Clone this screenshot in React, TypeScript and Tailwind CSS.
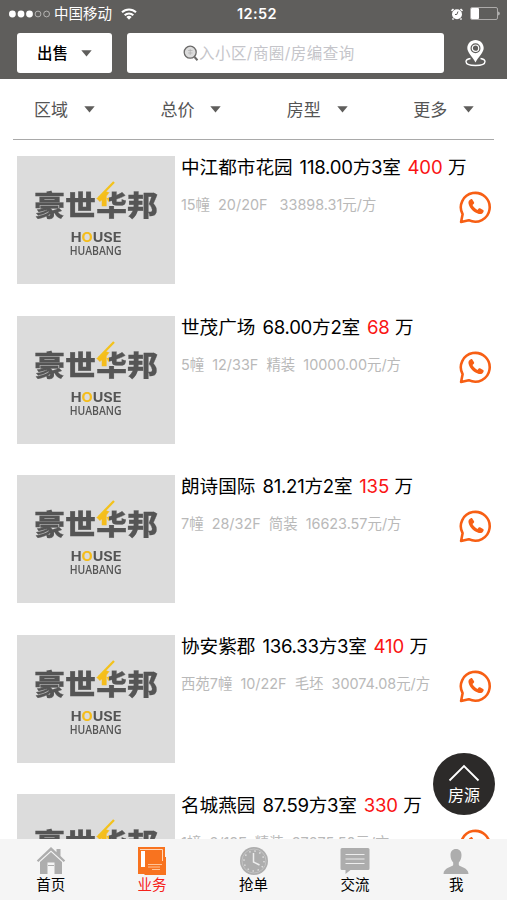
const FONT = "font-['Inter','Noto_Sans_CJK_SC',sans-serif]";

function Caret() {
  return (
    <svg width="11" height="7" viewBox="0 0 11 7" fill="#5f5e5c">
      <path d="M.3.3h10.4L5.5 6.5z" />
    </svg>
  );
}

function StatusBar() {
  return (
    <div className="flex h-[27px] items-center text-white">
      <div className="flex w-[169px] items-center pl-[9px]">
        <svg width="42" height="8" viewBox="0 0 42 8" fill="#fff">
          <circle cx="3.4" cy="4" r="3.4" />
          <circle cx="12" cy="4" r="3.4" />
          <circle cx="20.5" cy="4" r="3.4" />
          <g fill="none" stroke="#c9c8c7" strokeWidth=".8">
            <circle cx="29" cy="4" r="2.9" />
            <circle cx="37.6" cy="4" r="2.9" />
          </g>
        </svg>
        <span className="ml-[3px] pt-[2px] text-[14.5px] leading-none whitespace-nowrap">中国移动</span>
        <svg className="ml-[9px]" width="16" height="12" viewBox="0 0 16 12" fill="none" stroke="#fff" strokeWidth="2">
          <path d="M1 4.3a10 10 0 0 1 14 0M3.7 7.2a6 6 0 0 1 8.6 0" />
          <path d="M5.4 9a3.8 3.8 0 0 1 5.2 0L8 11.8z" fill="#fff" stroke="none" />
        </svg>
      </div>
      <div className="w-[176px] pt-px text-center text-[14.5px] leading-none font-semibold tracking-[0.4px]">12:52</div>
      <div className="flex flex-1 items-center justify-end gap-[7px] pr-[7px]">
        <svg width="12" height="12" viewBox="0 0 12 12">
          <circle cx="6" cy="6.3" r="5" fill="#fff" />
          <path d="M.5 2.800 2.500 1M11.500 2.800 9.500 1M2.500 10.500l-1 1M9.500 10.500l1 1" stroke="#fff" strokeWidth="1.6" />
          <path d="M7 3.500 5.800 6.500H4" fill="none" stroke="#5f5e5c" strokeWidth="1" />
        </svg>
        <svg width="30" height="13" viewBox="0 0 30 13">
          <rect x=".5" y=".5" width="27" height="12" rx="1.5" fill="none" stroke="#b5b4b3" strokeWidth=".9" />
          <rect x="1" y="1" width="8" height="11" rx="1" fill="#fff" />
          <path d="M28.500 4.500c1.300.5 1.300 3.500 0 4z" fill="#fff" />
        </svg>
      </div>
    </div>
  );
}

function Header() {
  return (
    <header className="h-[79px] bg-[#5f5e5c]">
      <StatusBar />
      <div className="flex pt-[6px] pl-[17px]">
        <button className="flex h-[40px] w-[95px] items-center rounded-[3px] bg-white pl-[20px] text-[15.5px] font-medium text-black">
          <span className="pt-px">出售</span>
          <span className="ml-[13px]"><Caret /></span>
        </button>
        <div className="ml-[15px] flex h-[40px] w-[317px] items-center rounded-[3px] bg-white pl-[56px]">
          <svg width="16" height="17" viewBox="0 0 16 17" fill="none" stroke="#6b6a69">
            <circle cx="7.200" cy="7.200" r="6" fill="#dcdcdc" strokeWidth="1.300" />
            <path d="M11.500 12l3 3.200" strokeWidth="2" />
            <path d="M5 5.500h4.500M5 8h4.500M7.200 4v6" stroke="#aaa" strokeWidth=".6" />
          </svg>
          <span className="pt-px text-[15.500px] tracking-[0.450px] whitespace-nowrap text-[#c5c5ca]">入小区/商圈/房编查询</span>
        </div>
        <svg className="mt-[7px] ml-[21px]" width="21" height="27" viewBox="0 0 21 27">
          <path d="M5.500 18.500C2.500 19 1 20 1 21.500 1 24 5 25.500 10.500 25.500S20 24 20 21.500c0-1.500-1.500-2.500-4.500-3" fill="none" stroke="#fff" strokeWidth="1.400" />
          <path fillRule="evenodd" fill="#fff" d="M10.500 0C6 0 2.300 3.600 2.300 8c0 4.500 5 8.500 8.200 14.500C13.700 16.500 18.700 12.500 18.700 8c0-4.400-3.700-8-8.200-8zm0 3.200a5 5 0 1 1 0 10 5 5 0 0 1 0-10z" />
          <circle cx="10.500" cy="8.200" r="3.200" fill="none" stroke="#fff" strokeWidth="1.200" />
        </svg>
      </div>
    </header>
  );
}

function Filters() {
  return (
    <nav className="mx-[13px] flex h-[61px] border-b border-[#a9a9a9] pl-[21px]">
      {["区域", "总价", "房型", "更多"].map((label) => (
        <div key={label} className="flex w-[126.4px] shrink-0 items-center text-[17px] text-[#555]">
          <span className="pt-[3px]">{label}</span>
          <span className="ml-[16px] pt-px"><Caret /></span>
        </div>
      ))}
    </nav>
  );
}

function Thumb() {
  return (
    <div className="flex h-[128px] w-[158px] shrink-0 flex-col items-center bg-[#dcdcdc] text-[#555]">
      <div className="relative mt-[33px] flex">
        <div className="flex scale-y-[0.92] text-[31px] leading-[34px] font-black [-webkit-text-stroke:0.3px_#555]">
          <span>豪</span>
          <span>世</span>
          <span className="bg-[#555] bg-[linear-gradient(#f5bd1c,#f5bd1c)] bg-[length:42%_54%] bg-clip-text bg-no-repeat text-transparent [-webkit-text-stroke:0.3px_transparent]">华</span>
          <span>邦</span>
        </div>
        <svg className="absolute -top-[9px] left-[63px]" width="20" height="20" viewBox="0 0 20 20" fill="none" stroke="#f3c21c" strokeWidth="2.300">
          <path d="M1.500 18 17 2" />
        </svg>
      </div>
      <div className="mt-[9px] h-[12px] scale-x-[1.150] text-[12.600px] leading-[12px] font-bold">
        H<span className="text-[#f5bd1c]">O</span>USE
      </div>
      <div className="h-[12px] scale-x-[0.820] font-['Open_Sans',sans-serif] text-[12.700px] leading-[12px] font-semibold">HUABANG</div>
    </div>
  );
}

function PhoneIcon() {
  return (
    <svg width="34" height="34" viewBox="0 0 33 33">
      <path d="M2 31 3.500 23.500A14 14 0 1 1 9.500 29.300z" fill="none" stroke="#f75f14" strokeWidth="2.500" strokeLinejoin="round" />
      <path d="M11.500 9c-1.800.6-2.700 2.200-2.200 4.400 1 4.500 5.500 8.800 10 9.800 2.300.5 4-.6 4.600-2.400.2-.6 0-1-.5-1.300l-3-1.700c-.5-.3-1-.2-1.300.2l-1.100 1.300c-2-.8-4-2.800-4.900-4.700l1.300-1.300c.4-.4.500-.8.200-1.300l-1.700-2.700c-.3-.5-.8-.6-1.400-.3z" fill="#f75f14" />
    </svg>
  );
}

type House = { name: string; size: string; price: string; info: string };

const houses: House[] = [
  { name: "中江都市花园", size: "118.00方3室", price: "400", info: "15幢  20/20F   33898.31元/方" },
  { name: "世茂广场", size: "68.00方2室", price: "68", info: "5幢  12/33F  精装  10000.00元/方" },
  { name: "朗诗国际", size: "81.21方2室", price: "135", info: "7幢  28/32F  简装  16623.57元/方" },
  { name: "协安紫郡", size: "136.33方3室", price: "410", info: "西苑7幢  10/22F  毛坯  30074.08元/方" },
  { name: "名城燕园", size: "87.59方3室", price: "330", info: "1幢  6/18F  精装  37675.50元/方" },
];

function Row({ house }: { house: House }) {
  return (
    <li className="flex h-[159.600px] pl-[17px]">
      <Thumb />
      <div className="ml-[6px] min-w-0 flex-1">
        <h2 className="-mt-px flex gap-[7px] text-[18.600px] leading-[24px] whitespace-nowrap text-black">
          <span>{house.name}</span>
          <span className="tracking-[-0.250px]">{house.size}</span>
          <span className="tracking-[-0.200px] text-[#fa1414]">{house.price}</span>
          <span className="-ml-[1.500px]">万</span>
        </h2>
        <div className="flex">
          <p className="mt-[16px] text-[14.400px] leading-[20px] whitespace-pre text-[#b9b9b9]">{house.info}</p>
          <span className="mt-[11px] mr-[14px] ml-auto"><PhoneIcon /></span>
        </div>
      </div>
    </li>
  );
}

const GREY = "#adadad";

const tabs = [
  {
    label: "首页",
    icon: (
      <svg width="30" height="28" viewBox="0 0 30 28" fill={GREY}>
        <path d="M15 0 .8 13.500l1.500 1.600L15 3.500l12.700 11.600 1.500-1.600L24.500 9V2h-4v3.200z" />
        <path fillRule="evenodd" d="M15 5 4 15v12h7.500V15.500h7V27H26V15z" />
        <path d="M12 18.500h6" stroke={GREY} strokeWidth="1" />
      </svg>
    ),
  },
  {
    label: "业务",
    icon: (
      <svg width="30" height="28" viewBox="0 0 30 28">
        <path d="M1 0h27v10h1v18H8l-1-1H1z" fill="#f8731f" />
        <path d="M3 2.500h22.500V14" fill="none" stroke="#ffd7b8" strokeWidth="1" />
        <path d="M4 4h4v16H4z" fill="#fff" />
        <path d="M11 17.500h14M11 20h12M15 22.500h8" stroke="#ffc397" strokeWidth="1" />
      </svg>
    ),
  },
  {
    label: "抢单",
    icon: (
      <svg width="30" height="28" viewBox="0 0 30 28" fill="none">
        <circle cx="15" cy="14" r="14" fill={GREY} />
        <circle cx="15" cy="14" r="12" stroke="#c6c6c6" strokeWidth=".8" />
        <circle cx="15" cy="14" r="10" stroke="#dedede" strokeWidth="1.500" strokeDasharray="1.500 3.736" />
        <path d="M14.500 6v9l6 3" stroke="#eee" strokeWidth="1.500" />
      </svg>
    ),
  },
  {
    label: "交流",
    icon: (
      <svg width="30" height="28" viewBox="0 0 30 28">
        <path d="M2 1h26q1.500 0 1.500 1.500v19q0 1.500-1.500 1.500H10.500L5.500 27v-4H2q-1.500 0-1.500-1.500v-19Q.5 1 2 1z" fill={GREY} />
        <path d="M5.500 7.500h19M5.500 12h19M5.500 16.500h19" stroke="#ededed" strokeWidth="1.200" />
      </svg>
    ),
  },
  {
    label: "我",
    icon: (
      <svg width="30" height="28" viewBox="0 0 30 28" fill={GREY}>
        <path d="M15 2c-3.500 0-5.500 2.500-5.500 6 0 3.500 1 5.500 2.700 7.500v2.500c-.7 2-9.700 2.500-9.700 9h25c0-6.500-9-7-9.700-9v-2.500c1.700-2 2.700-4 2.700-7.500 0-3.500-2-6-5.500-6z" />
      </svg>
    ),
  },
];

export default function App() {
  return (
    <div className={`relative flex h-[900px] w-[507px] flex-col overflow-hidden bg-white ${FONT}`}>
      <Header />
      <Filters />
      <ul className="min-h-0 flex-1 overflow-hidden pt-[16px]">
        {houses.map((house) => (
          <Row key={house.name} house={house} />
        ))}
      </ul>
      <footer className="flex h-[61px] shrink-0 bg-[#f5f5f5]">
        {tabs.map((tab) => (
          <div key={tab.label} className={`flex flex-1 flex-col items-center pt-[8px] text-[14.500px] leading-[17px] ${tab.label === "业务" ? "text-[#f5221b]" : "text-black"}`}>
            {tab.icon}
            <span className="mt-px">{tab.label}</span>
          </div>
        ))}
      </footer>
      <button className="absolute top-[753px] left-[433px] flex size-[62px] flex-col items-center rounded-full bg-[#2c2a29] text-[16px] leading-[20px] text-white">
        <svg className="mt-[11px]" width="32" height="18" viewBox="0 0 32 18" fill="none" stroke="#fff" strokeWidth="1.800">
          <path d="M1.500 16.500 16 2l14.500 14.500" />
        </svg>
        <span className="mt-[3px]">房源</span>
      </button>
    </div>
  );
}
